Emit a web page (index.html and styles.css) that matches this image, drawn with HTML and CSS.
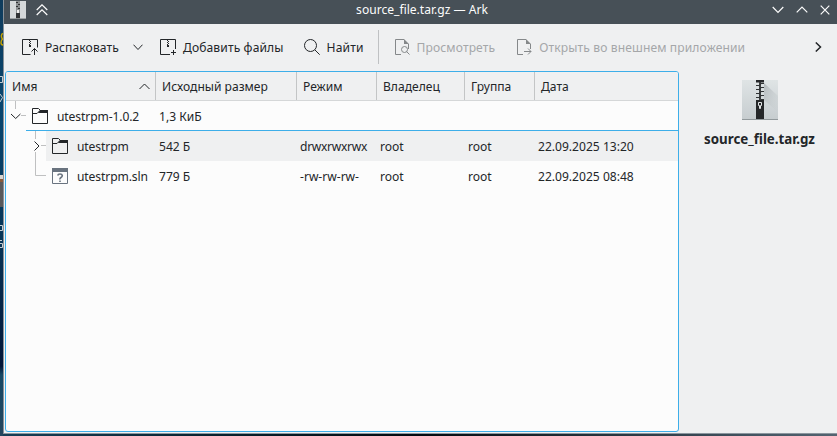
FILE: index.html
```html
<!DOCTYPE html>
<html lang="ru">
<head>
<meta charset="utf-8">
<title>source_file.tar.gz — Ark</title>
<link rel="stylesheet" href="styles.css">
</head>
<body>
<div class="desktop">
  <svg class="desk-items" width="3" height="436" viewBox="0 0 3 436">
    <path d="M3 33.500Q1 34 1.500 37Q2 39 3 39Q1 40 1 42.500Q1 45 3 45" stroke="#c4a000" stroke-width="1.500" fill="none"/>
    <path d="M0 76.500h2.500v6h-2.500M0 94l2.500 3.500L0 102" stroke="#c5cdd2" fill="none"/>
    <path d="M0 175h3v4h-3z" fill="#d9d5d0"/><path d="M0 179h3v3h-3z" fill="#8a5b3c"/><path d="M0 182h3v25h-3z" fill="#59595b"/>
    <path d="M0 225.500h2.500v5H0M0 240.500h2M0 243.500h2.500v4H0" stroke="#c5cdd2" fill="none"/>
  </svg>
  <main class="window">
    <header class="titlebar">
      <svg class="app-icon" width="16" height="18" viewBox="0 0 16 18"><path d="M0 0h16v18H0z" fill="#d5d9db"/><path d="M0 17h16v1H0z" fill="#9ea3a5"/><path d="M6 0h4v18H6z" fill="#8b8f91"/><path d="M6 1h2v1H6zM8 3h2v1H8zM6 5h2v1H6zM8 7h2v1H8zM6 12h4v5H6z" fill="#303335"/><path d="M7 9h2v3H7z" fill="#eee"/></svg>
      <svg class="shade" width="12" height="12" viewBox="0 0 12 12"><path d="M.7 6L6 .8 11.300 6M.7 11L6 5.800 11.300 11" class="light"/></svg>
      <h1>source_file.tar.gz — Ark</h1>
      <div class="controls">
        <svg width="12" height="8" viewBox="0 0 12 8"><path d="M.7 1L6 6.300 11.300 1" class="light"/></svg>
        <svg width="12" height="8" viewBox="0 0 12 8"><path d="M.7 6.300L6 1l5.300 5.300" class="light"/></svg>
        <svg width="10" height="10" viewBox="0 0 10 10"><path d="M.7.7l8.600 8.600M9.300.7L.7 9.300" class="light"/></svg>
      </div>
    </header>
    <nav class="toolbar">
      <button class="tool extract"><svg width="16" height="16" viewBox="0 0 16 16"><path d="M8.500 15.500H.5V.5h15v8M12.500 16V9.500M9.500 12.500l3-3 3 3" class="line"/><path d="M7 1h1v1H7zM8 2h1v1H8zM7 3h1v1H7zM8 4h1v1H8zM7 5h1v1H7zM7 6h2v2H7z" class="solid"/></svg><span>Распаковать</span></button>
      <button class="tool drop"><svg width="10" height="7" viewBox="0 0 10 7"><path d="M.5.7L5 5.500 9.500.7" class="line"/></svg></button>
      <button class="tool add"><svg width="16" height="16" viewBox="0 0 16 16"><path d="M10 15.500H.5V.5h15V10M13.500 11v5M11 13.500h5" class="line"/><path d="M7 1h1v1H7zM8 2h1v1H8zM7 3h1v1H7zM8 4h1v1H8zM7 5h1v1H7zM7 6h2v2H7z" class="solid"/></svg><span>Добавить файлы</span></button>
      <button class="tool find"><svg width="16" height="16" viewBox="0 0 16 16"><circle cx="6.500" cy="6.500" r="6" class="line"/><path d="M10.800 10.800l4.900 4.900" class="line"/></svg><span>Найти</span></button>
      <i class="divider"></i>
      <button class="tool view off"><svg width="16" height="16" viewBox="0 0 16 16"><path d="M7 15.500H1.500V.5H10M14.500 5v5" class="line"/><path d="M10 0l5 5h-5z" class="solid"/><circle cx="10.500" cy="10.500" r="3" class="line"/><path d="M12.500 12.500l3 3" class="line"/></svg><span>Просмотреть</span></button>
      <button class="tool external off"><svg width="16" height="16" viewBox="0 0 16 16"><path d="M7 15.500H1.500V.5H10M14.500 5v5M8 12.500h7M12 9.500l3 3-3 3" class="line"/><path d="M10 0l5 5h-5z" class="solid"/></svg><span>Открыть во внешнем приложении</span></button>
      <button class="tool more"><svg width="7" height="10" viewBox="0 0 7 10"><path d="M.8.5L5.500 5 .8 9.500" class="line strong"/></svg></button>
    </nav>
    <div class="content">
      <section class="tree">
        <div class="row head">
          <span class="name-head"><span>Имя</span><svg width="11" height="7" viewBox="0 0 11 7"><path d="M.5 6L5.500 1l5 5" class="line"/></svg></span>
          <span>Исходный размер</span><span>Режим</span><span>Владелец</span><span>Группа</span><span>Дата</span>
        </div>
        <div class="row root">
          <span class="name"><svg class="branch" width="20" height="30" viewBox="0 0 20 30"><path d="M9.500 0v8M15 14.500h5" class="guide"/><path d="M5 13l4.700 4.500 4.700-4.500" class="line"/></svg><svg class="icon" width="16" height="16" viewBox="0 0 16 16"><path d="M.5 15.500V.5h6l2 2h7v13zM.5 5.500H5l3-3" class="line"/><path d="M8 2h8v3H6z" class="solid"/></svg><span>utestrpm-1.0.2</span></span>
          <span>1,3 КиБ</span><span></span><span></span><span></span><span></span>
        </div>
        <div class="row folder">
          <span class="name"><svg class="branch" width="20" height="30" viewBox="0 0 20 30"><path d="M9.500 0v8M9.500 21v9M15 14.500h5" class="guide"/><path d="M8.500 10.500l4.500 4.500-4.500 4.500" class="line"/></svg><svg class="icon" width="16" height="16" viewBox="0 0 16 16"><path d="M.5 15.500V.5h6l2 2h7v13zM.5 5.500H5l3-3" class="line"/><path d="M8 2h8v3H6z" class="solid"/></svg><span>utestrpm</span></span>
          <span>542 Б</span><span class="mode">drwxrwxrwx</span><span>root</span><span>root</span><span>22.09.2025 13:20</span>
        </div>
        <div class="row file">
          <span class="name"><svg class="branch" width="20" height="30" viewBox="0 0 20 30"><path d="M9.500 0v14.500H20" class="guide"/></svg><svg class="icon" width="16" height="16" viewBox="0 0 16 16"><path d="M.5.5h15v15H.5z" fill="#fcfcfc" stroke="#69737f"/><path d="M0 0h16v4H0z" fill="#69737f"/><path d="M5.700 7.500Q6 6 8 6t2.300 1.500Q10.300 8.700 9 9.500T8 11.500M8 12.500V14" fill="none" stroke="#69737f" stroke-width="1.600"/></svg><span>utestrpm.sln</span></span>
          <span>779 Б</span><span>-rw-rw-rw-</span><span>root</span><span>root</span><span>22.09.2025 08:48</span>
        </div>
      </section>
      <aside class="info">
        <svg width="36" height="40" viewBox="0 0 36 40">
          <defs><linearGradient id="paper" x1="0" y1="0" x2="0" y2="1"><stop offset="0" stop-color="#dfe4e5"/><stop offset="1" stop-color="#c6cccf"/></linearGradient><linearGradient id="shadow" x1="0" y1="0" x2="1" y2="1"><stop offset="0" stop-color="#b4babd"/><stop offset="1" stop-color="#c6cccf" stop-opacity="0"/></linearGradient></defs>
          <path d="M0 0h36v40H0z" fill="url(#paper)"/><path d="M22 3l14 13v16L22 20z" fill="url(#shadow)"/><path d="M0 39h36v1H0z" fill="#92999c"/>
          <path d="M14 0h8v2.500h-8zM14 20h8v19h-8z" fill="#252729"/>
          <path d="M14 5.500h3l1.500 1M14 9.500h3l1.500 1M14 13.500h3l1.500 1M14 17.500h3l1.500 1M22 3.500h-3L17.500 5M22 7.500h-3L17.500 9M22 11.500h-3L17.500 13M22 15.500h-3L17.500 17M22 19.500h-3" fill="none" stroke="#303335" stroke-width="1.200"/><path d="M18 2v18" stroke="#303335" stroke-width="1.800"/>
          <path d="M16.500 22.500h3v3h-1v3h-1v-3h-1z" fill="none" stroke="#e2e5e6"/>
        </svg>
        <strong>source_file.tar.gz</strong>
      </aside>
    </div>
  </main>
</div>
</body>
</html>
```
FILE: styles.css
```css
* { box-sizing: border-box; }
body { margin: 0; font: 12.08px/18px "Noto Sans", sans-serif; color: #232629; overflow: hidden; }
svg { display: block; flex: none; }
.desktop { width: 837px; height: 436px; display: flex; background: linear-gradient(90deg, #173f57, #08222f 25%, #02090f 50%, #435461 90%, #536370); }
.desk-items { background: linear-gradient(#103c5c 0, #08466f 25%, #073456 55%, #021638 84%, #164865 86%, #24455d); }
.window { width: 834px; height: 434px; border-left: 1px solid #899198; border-bottom: 1px solid #8b969e; background: #eff0f1; }
.titlebar { height: 24px; background: #475057; color: #fcfcfc; display: flex; align-items: center; padding: 0 7px 4px 6px; }
.titlebar h1 { flex: 1; margin: 0; font-size: 12.08px; font-weight: 400; line-height: 18px; text-align: center; padding-left: 24px; }
.shade { margin-left: 10px; }
.controls { display: flex; align-items: center; gap: 12px; }
.light { fill: none; stroke: #fcfcfc; stroke-width: 1.2; }
.line { fill: none; stroke: currentColor; stroke-width: 1; }
.solid { fill: currentColor; }
.strong { stroke-width: 1.5; }
.guide { fill: none; stroke: #bfc0c1; }
.toolbar { height: 47px; display: flex; align-items: center; padding: 0 15px 1px 18px; }
.tool { display: flex; align-items: center; gap: 7px; padding: 0; border: 0; background: none; font: inherit; color: inherit; white-space: nowrap; letter-spacing: .12px; }
.tool span { padding-top: 2px; }
.drop { margin-left: 14px; }
.add { margin-left: 17px; }
.find { margin-left: 20px; }
.divider { width: 1px; height: 34px; background: #bfc1c3; margin-left: 14px; }
.off { color: #a5a7a9; }
.off svg { color: #85888a; }
.view { margin-left: 15px; }
.external { margin-left: 21px; }
.more { margin-left: auto; }
.content { display: flex; height: 361px; padding-left: 1px; }
.tree { width: 674px; border: 1px solid #3daee9; border-radius: 3px; background: #fcfcfc; overflow: hidden; }
.row { display: grid; grid-template-columns: 150px 141px 80px 88px 70px 1fr; height: 30px; align-items: center; white-space: nowrap; }
.row > span { padding: 2px 0 0 3px; }
.head { height: 29px; background: #eff0f1; border-bottom: 1px solid #d5d7d8; }
.head > span { height: 28px; line-height: 30px; padding: 0 0 0 6px; border-right: 1px solid #c3c5c6; }
.head > span:last-child { border: 0; }
.head .name-head { display: flex; align-items: center; justify-content: space-between; padding-right: 5px; }
.name-head > span { padding-top: 2px; }
.row > .name { display: flex; align-items: center; height: 30px; padding: 0; letter-spacing: -.1px; }
.name > span { padding-top: 2px; }
.mode { letter-spacing: -.3px; }
.icon { margin: 0 9px 0 6px; }
.root { background: linear-gradient(#3daee9, #3daee9) 20px 29px / 100% 1px no-repeat; }
.folder { background: linear-gradient(#eff0f1, #eff0f1) 40px 0 / 100% 100% no-repeat; }
.row.folder > .name, .row.file > .name { padding-left: 20px; }
.info { flex: 1; padding: 9px 0 0 3px; display: flex; flex-direction: column; align-items: center; }
.info strong { margin-top: 10px; font-size: 13.333px; font-weight: 700; }
```
